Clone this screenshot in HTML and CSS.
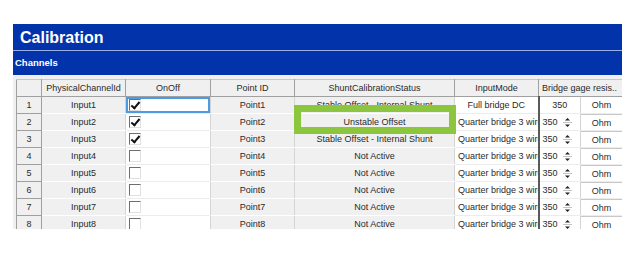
FILE: index.html
```html
<!DOCTYPE html>
<html lang="en">
  <head>
    <meta charset="UTF-8" />
    <title>Calibration</title>
    <link rel="stylesheet" href="styles.css">
  </head>
  <body>
    <div class="panel">
      <div class="title">Calibration</div>
      <div class="section">Channels</div>
      <div class="grid-wrap">
        <table class="grid">
          <colgroup>
            <col style="width: 25px" />
            <col style="width: 84px" />
            <col style="width: 85px" />
            <col style="width: 84px" />
            <col style="width: 160px" />
            <col style="width: 84px" />
            <col style="width: 42px" />
            <col style="width: 42px" />
          </colgroup>
          <thead>
            <tr>
              <th></th>
              <th>PhysicalChannelId</th>
              <th>OnOff</th>
              <th>Point ID</th>
              <th>ShuntCalibrationStatus</th>
              <th>InputMode</th>
              <th colspan="2" class="left">Bridge gage resis..</th>
            </tr>
          </thead>
          <tbody id="rows"></tbody>
        </table>
        <div class="highlight"></div>
      </div>
    </div>

    <script>
      const rows = document.querySelector("#rows");

      const channels = [
        { on: true, status: "Stable Offset - Internal Shunt", mode: "Full bridge DC" },
        { on: true, status: "Unstable Offset", mode: "Quarter bridge 3 wire" },
        { on: true, status: "Stable Offset - Internal Shunt", mode: "Quarter bridge 3 wire" },
        { on: false, status: "Not Active", mode: "Quarter bridge 3 wire" },
        { on: false, status: "Not Active", mode: "Quarter bridge 3 wire" },
        { on: false, status: "Not Active", mode: "Quarter bridge 3 wire" },
        { on: false, status: "Not Active", mode: "Quarter bridge 3 wire" },
        { on: false, status: "Not Active", mode: "Quarter bridge 3 wire" },
      ];

      const spinner =
        '<svg class="spin" width="9" height="13" viewBox="0 0 9 13">' +
        '<path d="M4.5 2 L7 4.5 L2 4.5 Z" fill="#222"/>' +
        '<line x1="0" y1="6.5" x2="9" y2="6.5" stroke="#c4c4c4"/>' +
        '<path d="M2 8.5 L7 8.5 L4.5 11 Z" fill="#222"/></svg>';

      channels.forEach((ch, index) => {
        const n = index + 1;
        const tr = document.createElement("tr");
        const first = index === 0;
        tr.innerHTML = `
          <td class="rowhead">${n}</td>
          <td class="ro">Input${n}</td>
          <td class="edit${first ? " focus" : ""}"><div class="cell"><span class="check${ch.on ? " on" : ""}"></span></div></td>
          <td class="ro">Point${n}</td>
          <td class="ro">${ch.status}</td>
          <td class="edit${first ? "" : " left"}">${ch.mode}</td>
          ${
            first
              ? '<td class="edit">350</td><td class="edit">Ohm</td>'
              : '<td class="edit left"><div class="cell"><span>350</span>' + spinner + '</div></td><td class="edit unit">Ohm</td>'
          }
        `;
        rows.append(tr);
      });
    </script>
  </body>
</html>
```

FILE: styles.css
```css
body {
  margin: 0;
  padding: 24px 0 0 13px;
  background: #fff;
  font-family: "Liberation Sans", Arial, sans-serif;
}

.panel {
  width: 609px;
  height: 205px;
  overflow: hidden;
  background: #0233ab;
}

.title {
  height: 26px;
  line-height: 27px;
  padding-left: 7px;
  color: #fff;
  font-size: 16px;
  font-weight: bold;
  border-bottom: 1px solid #9aaee6;
}

.section {
  height: 24px;
  line-height: 23px;
  padding-left: 2px;
  color: #fff;
  font-size: 9.5px;
  font-weight: bold;
}

.grid-wrap {
  position: relative;
  background: #f0f0f0;
  padding: 4px 0 0 3px;
  height: 200px;
}

.grid {
  table-layout: fixed;
  border-collapse: collapse;
  width: 606px;
  font-size: 9px;
  color: #2a2a2a;
  border-left: 1px solid #a0a0a0;
  border-top: 1px solid #c8c8c8;
}

.grid th,
.grid td {
  height: 16px;
  line-height: 14px;
  padding: 0 3px;
  text-align: center;
  white-space: nowrap;
  overflow: hidden;
  border-right: 1px solid #d4d4d4;
  border-bottom: 1px solid #fff;
}

.grid th {
  font-weight: normal;
  background: #f0f0f0;
  border-right: 1px solid #a0a0a0;
  border-bottom: 1px solid #a0a0a0;
}

.grid th.left,
.grid td.left {
  text-align: left;
}

.grid td.rowhead {
  background: #f0f0f0;
  border-right: 1px solid #a0a0a0;
  border-bottom: 1px solid #a0a0a0;
}

.grid td.ro {
  background: #f0f0f0;
}

.grid td.edit {
  background: #fff;
  border-bottom: 1px solid #ececec;
}

.grid td:nth-child(6) {
  border-right: 2px solid #5a5a5a;
}

.grid td.focus {
  box-shadow: inset 0 0 0 2px #4d9be6;
}

.cell {
  display: flex;
  align-items: center;
  height: 14px;
}

.spin {
  display: block;
  margin-left: 5px;
}

.grid td.unit {
  box-shadow: inset 0 1px 0 #c8c8c8;
  height: 14px;
  padding-top: 2px;
}

.check {
  width: 12px;
  height: 12px;
  box-sizing: border-box;
  border-top: 1px solid #6e6e6e;
  border-left: 1px solid #6e6e6e;
  border-right: 1px solid #e0e0e0;
  border-bottom: 1px solid #e0e0e0;
  background: #fff;
  position: relative;
}

.check.on::after {
  content: "";
  position: absolute;
  left: 3px;
  top: 0;
  width: 3px;
  height: 7px;
  border-right: 2px solid #111;
  border-bottom: 2px solid #111;
  transform: rotate(40deg);
}

.highlight {
  position: absolute;
  left: 281px;
  top: 30px;
  width: 148px;
  height: 15px;
  border: 7px solid #8cc63f;
}
```
